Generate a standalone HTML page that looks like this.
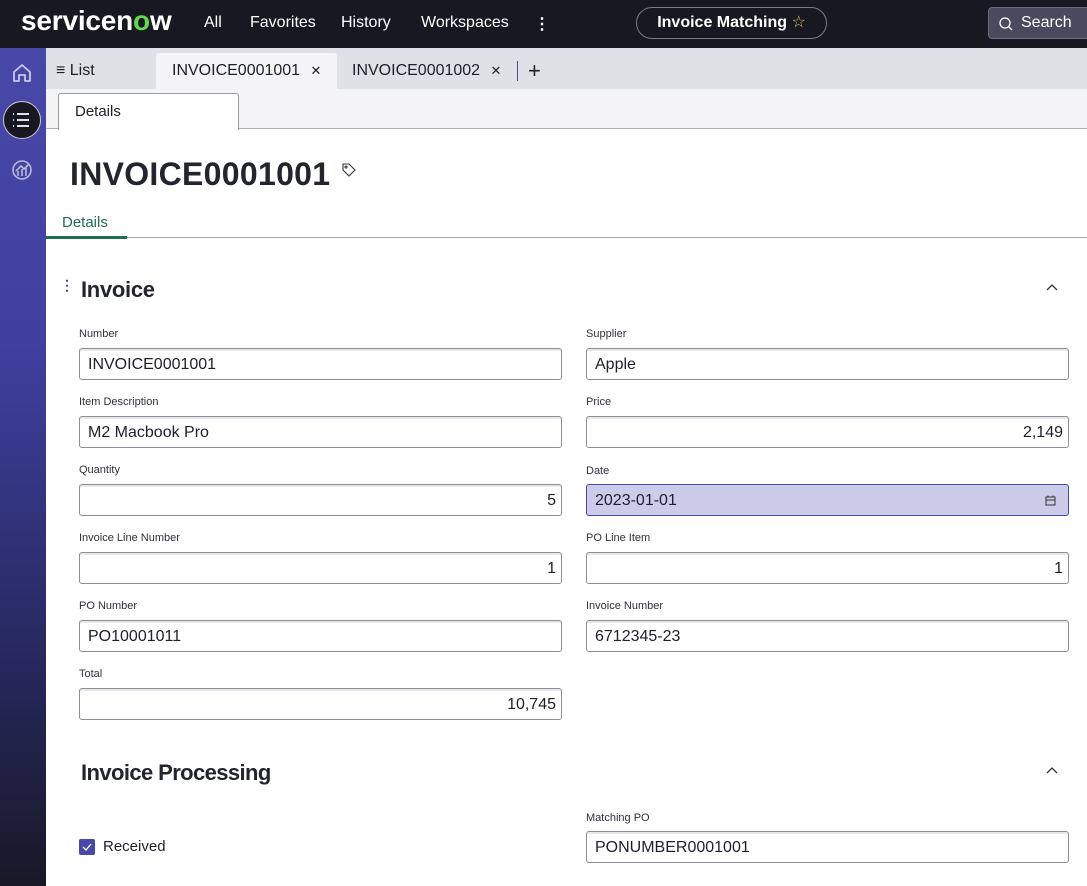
<!DOCTYPE html>
<html><head><meta charset="utf-8"><style>
*{box-sizing:border-box;margin:0;padding:0}
body{width:1087px;height:886px;overflow:hidden;font-family:"Liberation Sans",sans-serif;background:#fff;position:relative;color:#1d1f2a}
.top{position:absolute;left:0;top:0;width:1087px;height:48px;background:#181822;color:#fff}
.logo{position:absolute;left:21px;top:5px;font-size:28px;font-weight:bold;letter-spacing:-0.2px;color:#fff}
.nav{position:absolute;top:14px;font-size:16px;color:#fff}
.pill{position:absolute;left:636px;top:7px;width:191px;height:32px;border:1px solid #7a7b86;border-radius:16px;font-size:16px;font-weight:bold;text-align:center;line-height:30px}
.search{position:absolute;left:988px;top:7px;width:110px;height:32px;border:1px solid #6b6c7a;border-radius:4px;background:#4a4a5e;font-size:16px;line-height:30px;padding-left:32px}
.side{position:absolute;left:0;top:48px;width:46px;height:838px;background:linear-gradient(#4848a9 0%,#4040a0 35%,#25275a 75%,#181826 100%)}
.tabbar{position:absolute;left:46px;top:48px;width:1041px;height:41px;background:#e0e1e6}
.sub{position:absolute;left:46px;top:89px;width:1041px;height:40px;background:#f4f4f6;border-bottom:1px solid #b0b2ba}
.t{position:absolute;font-size:16px}
.lbl{position:absolute;font-size:11px;color:#2e303a}
.inp{position:absolute;height:32px;border:1px solid #8c8e96;border-radius:3px;font-size:16px;line-height:31px;padding:0 8px;box-shadow:inset 0 2px 0 #e8e8ea}
.r{text-align:right;padding-right:5px}
</style></head><body>
<div class="top">
<div class="logo">servicen<span style="color:#62d84e">o</span>w</div>
<div class="nav" style="left:204px">All</div>
<div class="nav" style="left:250px">Favorites</div>
<div class="nav" style="left:341px">History</div>
<div class="nav" style="left:421px">Workspaces</div>
<div class="nav" style="left:534px;font-weight:bold">⋮</div>
<div class="pill">Invoice Matching <span style="color:#e4c15a;font-weight:normal">☆</span></div>
<div class="search"><svg style="position:absolute;left:9px;top:8px" width="16" height="16" viewBox="0 0 16 16" fill="none" stroke="#fff" stroke-width="1.3"><circle cx="7" cy="7" r="5"/><path d="M10.5 10.5L14 14"/></svg>Search</div>
</div>
<div class="side">
<svg style="position:absolute;left:11px;top:14px" width="22" height="22" viewBox="0 0 22 22" fill="none" stroke="#c8c8e8" stroke-width="1.8"><path d="M3 10L11 3L19 10V19H14V13H8V19H3Z" stroke-linejoin="round"/></svg>
<div style="position:absolute;left:3px;top:53px;width:38px;height:38px;border-radius:50%;background:#181822;border:1px solid #ccc"></div>
<svg style="position:absolute;left:12px;top:64px" width="18" height="16" viewBox="0 0 18 16" stroke="#fff" stroke-width="1.8"><path d="M1 2h1M5 2h12M1 8h1M5 8h12M1 14h1M5 14h12"/></svg>
<svg style="position:absolute;left:11px;top:111px" width="22" height="22" viewBox="0 0 22 22" fill="none" stroke="#b8b8d8" stroke-width="1.6"><circle cx="11" cy="11" r="9"/><path d="M7 17V12M11 17V10M15 17V8M5 12L10 7L13 10L18 5"/></svg>
</div>
<div class="tabbar">
<div class="t" style="left:10px;top:14px">≡ List</div>
<div style="position:absolute;left:110px;top:5px;width:181px;height:36px;background:#f4f4f6;border-radius:3px 3px 0 0"></div>
<div class="t" style="left:126px;top:14px">INVOICE0001001 <span style="font-size:13px;margin-left:6px">✕</span></div>
<div class="t" style="left:306px;top:14px">INVOICE0001002 <span style="font-size:13px;margin-left:6px">✕</span></div>
<div style="position:absolute;left:471px;top:13px;width:1px;height:20px;background:#4848a9"></div>
<div class="t" style="left:482px;top:10px;font-size:22px;font-weight:300">+</div>
</div>
<div class="sub">
<div style="position:absolute;left:12px;top:4px;width:181px;height:37px;background:#fff;border:1px solid #9a9ca4;border-bottom:none;border-radius:3px 3px 0 0"></div>
<div class="t" style="left:29px;top:14px;font-size:15px">Details</div>
</div>
<div style="position:absolute;left:70px;top:156px;font-size:32px;font-weight:bold;color:#22242e;letter-spacing:0.3px">INVOICE0001001</div>
<svg style="position:absolute;left:341px;top:162px" width="16" height="16" viewBox="0 0 16 16" fill="none" stroke="#333" stroke-width="1.1"><path d="M2 2H8L14 8L8 14L2 8Z"/><circle cx="5" cy="5" r="1"/></svg>
<div class="t" style="left:62px;top:214px;font-size:15px;color:#1f6e4e">Details</div>
<div style="position:absolute;left:46px;top:237px;width:1041px;height:1px;background:#a8aab2"></div>
<div style="position:absolute;left:46px;top:236px;width:81px;height:3px;background:#1f6e4e"></div>
<div style="position:absolute;left:60px;top:277px;color:#4848a9;font-size:14px;font-weight:bold">⋮</div>
<div style="position:absolute;left:81px;top:277px;font-size:22px;font-weight:bold;color:#22242e;letter-spacing:-0.3px">Invoice</div>
<svg style="position:absolute;left:1045px;top:282px" width="14" height="10" viewBox="0 0 14 10" fill="none" stroke="#333" stroke-width="1.3"><path d="M2 8L7 3L12 8"/></svg>

<div class="lbl" style="left:79px;top:328px">Number</div><div class="inp" style="left:79px;top:348px;width:483px">INVOICE0001001</div>
<div class="lbl" style="left:586px;top:328px">Supplier</div><div class="inp" style="left:586px;top:348px;width:483px">Apple</div>
<div class="lbl" style="left:79px;top:396px">Item Description</div><div class="inp" style="left:79px;top:416px;width:483px">M2 Macbook Pro</div>
<div class="lbl" style="left:586px;top:396px">Price</div><div class="inp r" style="left:586px;top:416px;width:483px">2,149</div>
<div class="lbl" style="left:79px;top:464px">Quantity</div><div class="inp r" style="left:79px;top:484px;width:483px">5</div>
<div class="lbl" style="left:586px;top:465px">Date</div><div class="inp" style="left:586px;top:484px;width:483px;background:#cbcce9;border-color:#4848a9;box-shadow:none">2023-01-01<svg style="position:absolute;right:12px;top:10px" width="11" height="11" viewBox="0 0 11 11" fill="none" stroke="#333"><rect x="1" y="2" width="9" height="8"/><path d="M1 5H10M3 0.5V2.5M8 0.5V2.5"/></svg></div>
<div class="lbl" style="left:79px;top:532px">Invoice Line Number</div><div class="inp r" style="left:79px;top:552px;width:483px">1</div>
<div class="lbl" style="left:586px;top:532px">PO Line Item</div><div class="inp r" style="left:586px;top:552px;width:483px">1</div>
<div class="lbl" style="left:79px;top:600px">PO Number</div><div class="inp" style="left:79px;top:620px;width:483px">PO10001011</div>
<div class="lbl" style="left:586px;top:600px">Invoice Number</div><div class="inp" style="left:586px;top:620px;width:483px">6712345-23</div>
<div class="lbl" style="left:79px;top:668px">Total</div><div class="inp r" style="left:79px;top:688px;width:483px">10,745</div>

<div style="position:absolute;left:81px;top:760px;font-size:22px;font-weight:bold;color:#22242e;letter-spacing:-0.6px">Invoice Processing</div>
<svg style="position:absolute;left:1045px;top:765px" width="14" height="10" viewBox="0 0 14 10" fill="none" stroke="#333" stroke-width="1.3"><path d="M2 8L7 3L12 8"/></svg>
<div style="position:absolute;left:79px;top:839px;width:16px;height:16px;background:#4848a9;border-radius:2px"></div>
<svg style="position:absolute;left:82px;top:843px" width="10" height="8" viewBox="0 0 10 8" fill="none" stroke="#fff" stroke-width="1.3"><path d="M1 4L4 7L9 1"/></svg>
<div class="t" style="left:103px;top:838px;font-size:15px">Received</div>
<div class="lbl" style="left:586px;top:812px">Matching PO</div><div class="inp" style="left:586px;top:831px;width:483px">PONUMBER0001001</div>
</body></html>
